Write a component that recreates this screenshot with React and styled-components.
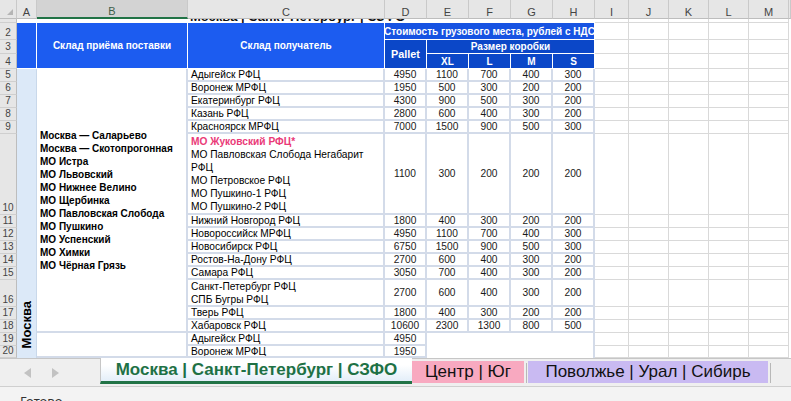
import React from 'react';
import styled, { createGlobalStyle, css } from 'styled-components';

const Global = createGlobalStyle`
  html, body { margin: 0; padding: 0; background: #fff; overflow: hidden; }
  body { font-family: "Liberation Sans", Arial, sans-serif; width: 791px; height: 401px; }
`;

const COLS = [17, 20, 151, 197, 42, 42, 42, 42, 42, 34, 40, 40, 40, 40, 2];
const ROWS = [19, 4, 17, 14, 15, 13, 13, 13, 13, 13, 81, 13, 13, 13, 13, 13, 27, 13, 13, 13, 12];
const LETTERS = ['A', 'B', 'C', 'D', 'E', 'F', 'G', 'H', 'I', 'J', 'K', 'L', 'M'];

const BLUE = '#1c5cf0';
const BLUE_MID = '#1753e2';
const BLUE_DARK = '#0b47c8';
const LINE = '#d3dbe9';
const GRID = '#d9d9d9';

const place = css`
  grid-column: ${(p) => p.$c} / span ${(p) => p.$cs || 1};
  grid-row: ${(p) => p.$r} / span ${(p) => p.$rs || 1};
  min-width: 0;
  min-height: 0;
  box-sizing: border-box;
  overflow: hidden;
`;

const Sheet = styled.div`
  display: grid;
  grid-template-columns: ${COLS.map((c) => c + 'px').join(' ')};
  grid-template-rows: ${ROWS.map((r) => r + 'px').join(' ')};
  height: 358px;
  overflow: hidden;
  font-size: 10.2px;
  color: #111;
`;

const Corner = styled.div`
  ${place};
  background: #e6e6e6;
  border-right: 1px solid #c9c9c9;
  border-bottom: 1px solid #bdbdbd;
  position: relative;
  &::after {
    content: '';
    position: absolute;
    right: 3px;
    bottom: 3px;
    border-left: 6px solid transparent;
    border-bottom: 6px solid #b5b5b5;
  }
`;

const ColHead = styled.div`
  ${place};
  display: flex;
  align-items: flex-end;
  justify-content: center;
  background: ${(p) => (p.$sel ? '#d3d3d3' : '#e6e6e6')};
  border-right: 1px solid #c9c9c9;
  border-bottom: ${(p) => (p.$sel ? '2px solid #217346' : '1px solid #bdbdbd')};
  color: ${(p) => (p.$sel ? '#3d5e4a' : '#444')};
  font-size: 11px;
  line-height: ${(p) => (p.$sel ? '11px' : '12px')};
`;

const RowHead = styled.div`
  ${place};
  display: flex;
  align-items: flex-end;
  justify-content: center;
  background: #e6e6e6;
  border-right: 1px solid #bdbdbd;
  border-bottom: 1px solid #cfcfcf;
  color: #444;
  font-size: 10px;
  line-height: 12px;
`;

const TitleCell = styled.div`
  ${place};
  display: flex;
  align-items: flex-end;
  padding-left: 2px;
  background: #fff;
  span {
    font-weight: bold;
    font-size: 13px;
    line-height: 14px;
    white-space: nowrap;
    margin-bottom: -1px;
  }
`;

const toneColor = { bright: BLUE, mid: BLUE_MID, dark: BLUE_DARK };

const HeadCell = styled.div`
  ${place};
  display: flex;
  align-items: center;
  justify-content: center;
  text-align: center;
  background: ${(p) => toneColor[p.$tone]};
  border-right: 1px solid #fff;
  border-bottom: 1px solid #fff;
  color: #fff;
  font-weight: bold;
  font-size: ${(p) => (p.$big ? '10.8px' : '10px')};
  white-space: nowrap;
`;

const SideCell = styled.div`
  ${place};
  display: flex;
  flex-direction: column;
  justify-content: flex-end;
  align-items: center;
  padding-bottom: 10px;
  background: #dce9f8;
  border-right: 1px solid #c9d8ea;
  span {
    writing-mode: vertical-rl;
    transform: rotate(180deg);
    font-weight: bold;
    font-size: 13px;
    line-height: 14px;
    color: #000;
  }
`;

const SourceCell = styled.div`
  ${place};
  display: flex;
  flex-direction: column;
  justify-content: center;
  padding-left: 3px;
  background: #fff;
  border-right: 2px solid ${LINE};
  border-bottom: 2px solid ${LINE};
  font-weight: bold;
  font-size: 10px;
  line-height: 13px;
  color: #000;
`;

const DestCell = styled.div`
  ${place};
  display: flex;
  flex-direction: column;
  justify-content: center;
  padding-left: 3px;
  background: #fff;
  border-right: 2px solid ${LINE};
  border-bottom: 2px solid ${LINE};
  font-size: 10.2px;
  line-height: 13px;
  white-space: nowrap;
  color: #000;
`;

const DestLine = styled.div`
  color: ${(p) => (p.$hot ? '#ea3a78' : '#000')};
  font-weight: ${(p) => (p.$hot ? 'bold' : 'normal')};
`;

const NumCell = styled.div`
  ${place};
  display: flex;
  align-items: center;
  justify-content: center;
  background: #fff;
  border-right: 2px solid ${LINE};
  border-bottom: 2px solid ${LINE};
  font-size: 10.2px;
  color: #1a1a1a;
`;

const BlankCell = styled.div`
  ${place};
  background: #fff;
  border-right: ${(p) => (p.$edge ? `2px solid ${LINE}` : 'none')};
`;

const GridCell = styled.div`
  ${place};
  background: #fff;
  border-right: 1px solid ${GRID};
  border-bottom: 1px solid ${GRID};
`;

const TabBar = styled.div`
  display: flex;
  align-items: flex-start;
  height: 29px;
  box-sizing: border-box;
  background: #efefef;
  border-top: 1px solid #c6c6c6;
  border-bottom: 1px solid #cfcfcf;
`;

const Nav = styled.div`
  width: 100px;
  height: 27px;
  display: flex;
  align-items: center;
  padding-left: 24px;
  gap: 21px;
  box-sizing: border-box;
`;

const ActiveTab = styled.div`
  width: 312px;
  height: 26px;
  margin-top: -1px;
  box-sizing: border-box;
  display: flex;
  align-items: center;
  justify-content: center;
  border-left: 1px solid #c6c6c6;
  border-bottom: 3px solid #217346;
  background: linear-gradient(#ffffff 30%, #e3eef9);
  color: #1e7145;
  font-weight: bold;
  font-size: 17px;
  padding-top: 1px;
  white-space: nowrap;
`;

const ColorTab = styled.div`
  width: ${(p) => p.$w}px;
  height: 22px;
  margin-top: 2px;
  display: flex;
  align-items: center;
  justify-content: center;
  background: ${(p) => p.$bg};
  color: #111;
  font-size: 17px;
  white-space: nowrap;
`;

const TabSep = styled.div`
  width: 1px;
  height: 20px;
  margin: 4px 1px 0 2px;
  background: #b8b8b8;
`;

const StatusBar = styled.div`
  height: 20px;
  background: #f3f3f3;
  padding-left: 20px;
  padding-top: 6px;
  font-family: "Noto Sans", "Liberation Sans", sans-serif;
  font-size: 13px;
  color: #333;
  line-height: 16px;
`;

const Arrow = ({ dir }) => (
  <svg width="7" height="10" viewBox="0 0 7 10">
    {dir === 'left' ? (
      <polygon points="7,0 7,10 0,5" fill="#c2c2c2" />
    ) : (
      <polygon points="0,0 0,10 7,5" fill="#c2c2c2" />
    )}
  </svg>
);

const SOURCES = [
  'Москва — Саларьево',
  'Москва — Скотопрогонная',
  'МО Истра',
  'МО Львовский',
  'МО Нижнее Велино',
  'МО Щербинка',
  'МО Павловская Слобода',
  'МО Пушкино',
  'МО Успенский',
  'МО Химки',
  'МО Чёрная Грязь',
];

const DEST = [
  { r: 5, lines: ['Адыгейск РФЦ'], v: [4950, 1100, 700, 400, 300] },
  { r: 6, lines: ['Воронеж МРФЦ'], v: [1950, 500, 300, 200, 200] },
  { r: 7, lines: ['Екатеринбург РФЦ'], v: [4300, 900, 500, 300, 200] },
  { r: 8, lines: ['Казань РФЦ'], v: [2800, 600, 400, 300, 200] },
  { r: 9, lines: ['Красноярск МРФЦ'], v: [7000, 1500, 900, 500, 300] },
  {
    r: 10,
    lines: [
      { t: 'МО Жуковский РФЦ*', hot: true },
      'МО Павловская Слобода Негабарит',
      'РФЦ',
      'МО Петровское РФЦ',
      'МО Пушкино-1 РФЦ',
      'МО Пушкино-2 РФЦ',
    ],
    v: [1100, 300, 200, 200, 200],
  },
  { r: 11, lines: ['Нижний Новгород РФЦ'], v: [1800, 400, 300, 200, 200] },
  { r: 12, lines: ['Новороссийск МРФЦ'], v: [4950, 1100, 700, 400, 300] },
  { r: 13, lines: ['Новосибирск РФЦ'], v: [6750, 1500, 900, 500, 300] },
  { r: 14, lines: ['Ростов-На-Дону РФЦ'], v: [2700, 600, 400, 300, 200] },
  { r: 15, lines: ['Самара РФЦ'], v: [3050, 700, 400, 300, 200] },
  { r: 16, lines: ['Санкт-Петербург РФЦ', 'СПБ Бугры РФЦ'], v: [2700, 600, 400, 300, 200] },
  { r: 17, lines: ['Тверь РФЦ'], v: [1800, 400, 300, 200, 200] },
  { r: 18, lines: ['Хабаровск РФЦ'], v: [10600, 2300, 1300, 800, 500] },
  { r: 19, lines: ['Адыгейск РФЦ'], v: [4950] },
  { r: 20, lines: ['Воронеж МРФЦ'], v: [1950] },
];

// sheet row n -> grid row n + 1 ; column letter index i (A=0) -> grid column i + 2
const gr = (n) => n + 1;
const gc = (i) => i + 2;

export default function App() {
  const rowNums = Array.from({ length: 20 }, (_, i) => i + 1);
  return (
    <>
      <Global />
      <Sheet>
        <Corner $c={1} $r={1} />
        {LETTERS.map((l, i) => (
          <ColHead key={l} $c={gc(i)} $r={1} $sel={l === 'B'}>
            {l}
          </ColHead>
        ))}
        <ColHead $c={15} $r={1} />

        {rowNums.map((n) => (
          <RowHead key={n} $c={1} $r={gr(n)}>
            {n}
          </RowHead>
        ))}

        {/* row 1 */}
        <BlankCell $c={gc(0)} $r={gr(1)} $cs={2} />
        <TitleCell $c={gc(2)} $r={gr(1)} $cs={6}>
          <span>Москва | Санкт-Петербург | СЗФО</span>
        </TitleCell>

        {/* header rows 2-4 */}
        <HeadCell $c={gc(0)} $r={gr(2)} $rs={3} $tone="bright" />
        <HeadCell $c={gc(1)} $r={gr(2)} $rs={3} $tone="bright">
          Склад приёма поставки
        </HeadCell>
        <HeadCell $c={gc(2)} $r={gr(2)} $rs={3} $tone="bright">
          Склад получатель
        </HeadCell>
        <HeadCell $c={gc(3)} $r={gr(2)} $cs={5} $tone="mid">
          Стоимость грузового места, рублей с НДС
        </HeadCell>
        <HeadCell $c={gc(3)} $r={gr(3)} $rs={2} $tone="dark" $big>
          Pallet
        </HeadCell>
        <HeadCell $c={gc(4)} $r={gr(3)} $cs={4} $tone="dark">
          Размер коробки
        </HeadCell>
        {['XL', 'L', 'M', 'S'].map((s, i) => (
          <HeadCell key={s} $c={gc(4 + i)} $r={gr(4)} $tone="dark">
            {s}
          </HeadCell>
        ))}

        {/* column A */}
        <SideCell $c={gc(0)} $r={gr(5)} $rs={16}>
          <span>Москва</span>
        </SideCell>

        {/* column B */}
        <SourceCell $c={gc(1)} $r={gr(5)} $rs={14}>
          {SOURCES.map((s) => (
            <div key={s}>{s}</div>
          ))}
        </SourceCell>
        <SourceCell $c={gc(1)} $r={gr(19)} $rs={2} />

        {/* columns C-H */}
        {DEST.map((d) => (
          <React.Fragment key={d.r}>
            <DestCell $c={gc(2)} $r={gr(d.r)}>
              {d.lines.map((l, i) =>
                typeof l === 'string' ? (
                  <DestLine key={i}>{l}</DestLine>
                ) : (
                  <DestLine key={i} $hot={l.hot}>
                    {l.t}
                  </DestLine>
                )
              )}
            </DestCell>
            {d.v.map((v, i) => (
              <NumCell key={i} $c={gc(3 + i)} $r={gr(d.r)}>
                {v}
              </NumCell>
            ))}
          </React.Fragment>
        ))}
        <BlankCell $c={gc(4)} $r={gr(19)} $cs={4} $rs={2} $edge />

        {/* empty grid I-M */}
        {rowNums.map((n) =>
          [8, 9, 10, 11, 12].map((i) => <GridCell key={n + '-' + i} $c={gc(i)} $r={gr(n)} />)
        )}
        {rowNums.map((n) => (
          <BlankCell key={'f' + n} $c={15} $r={gr(n)} />
        ))}
      </Sheet>

      <TabBar>
        <Nav>
          <Arrow dir="left" />
          <Arrow dir="right" />
        </Nav>
        <ActiveTab>Москва | Санкт-Петербург | СЗФО</ActiveTab>
        <ColorTab $w={112} $bg="#f8a9c0">
          Центр | Юг
        </ColorTab>
        <TabSep />
        <ColorTab $w={240} $bg="#c9baf2">
          Поволжье | Урал | Сибирь
        </ColorTab>
        <TabSep />
      </TabBar>
      <StatusBar>Готово</StatusBar>
    </>
  );
}
